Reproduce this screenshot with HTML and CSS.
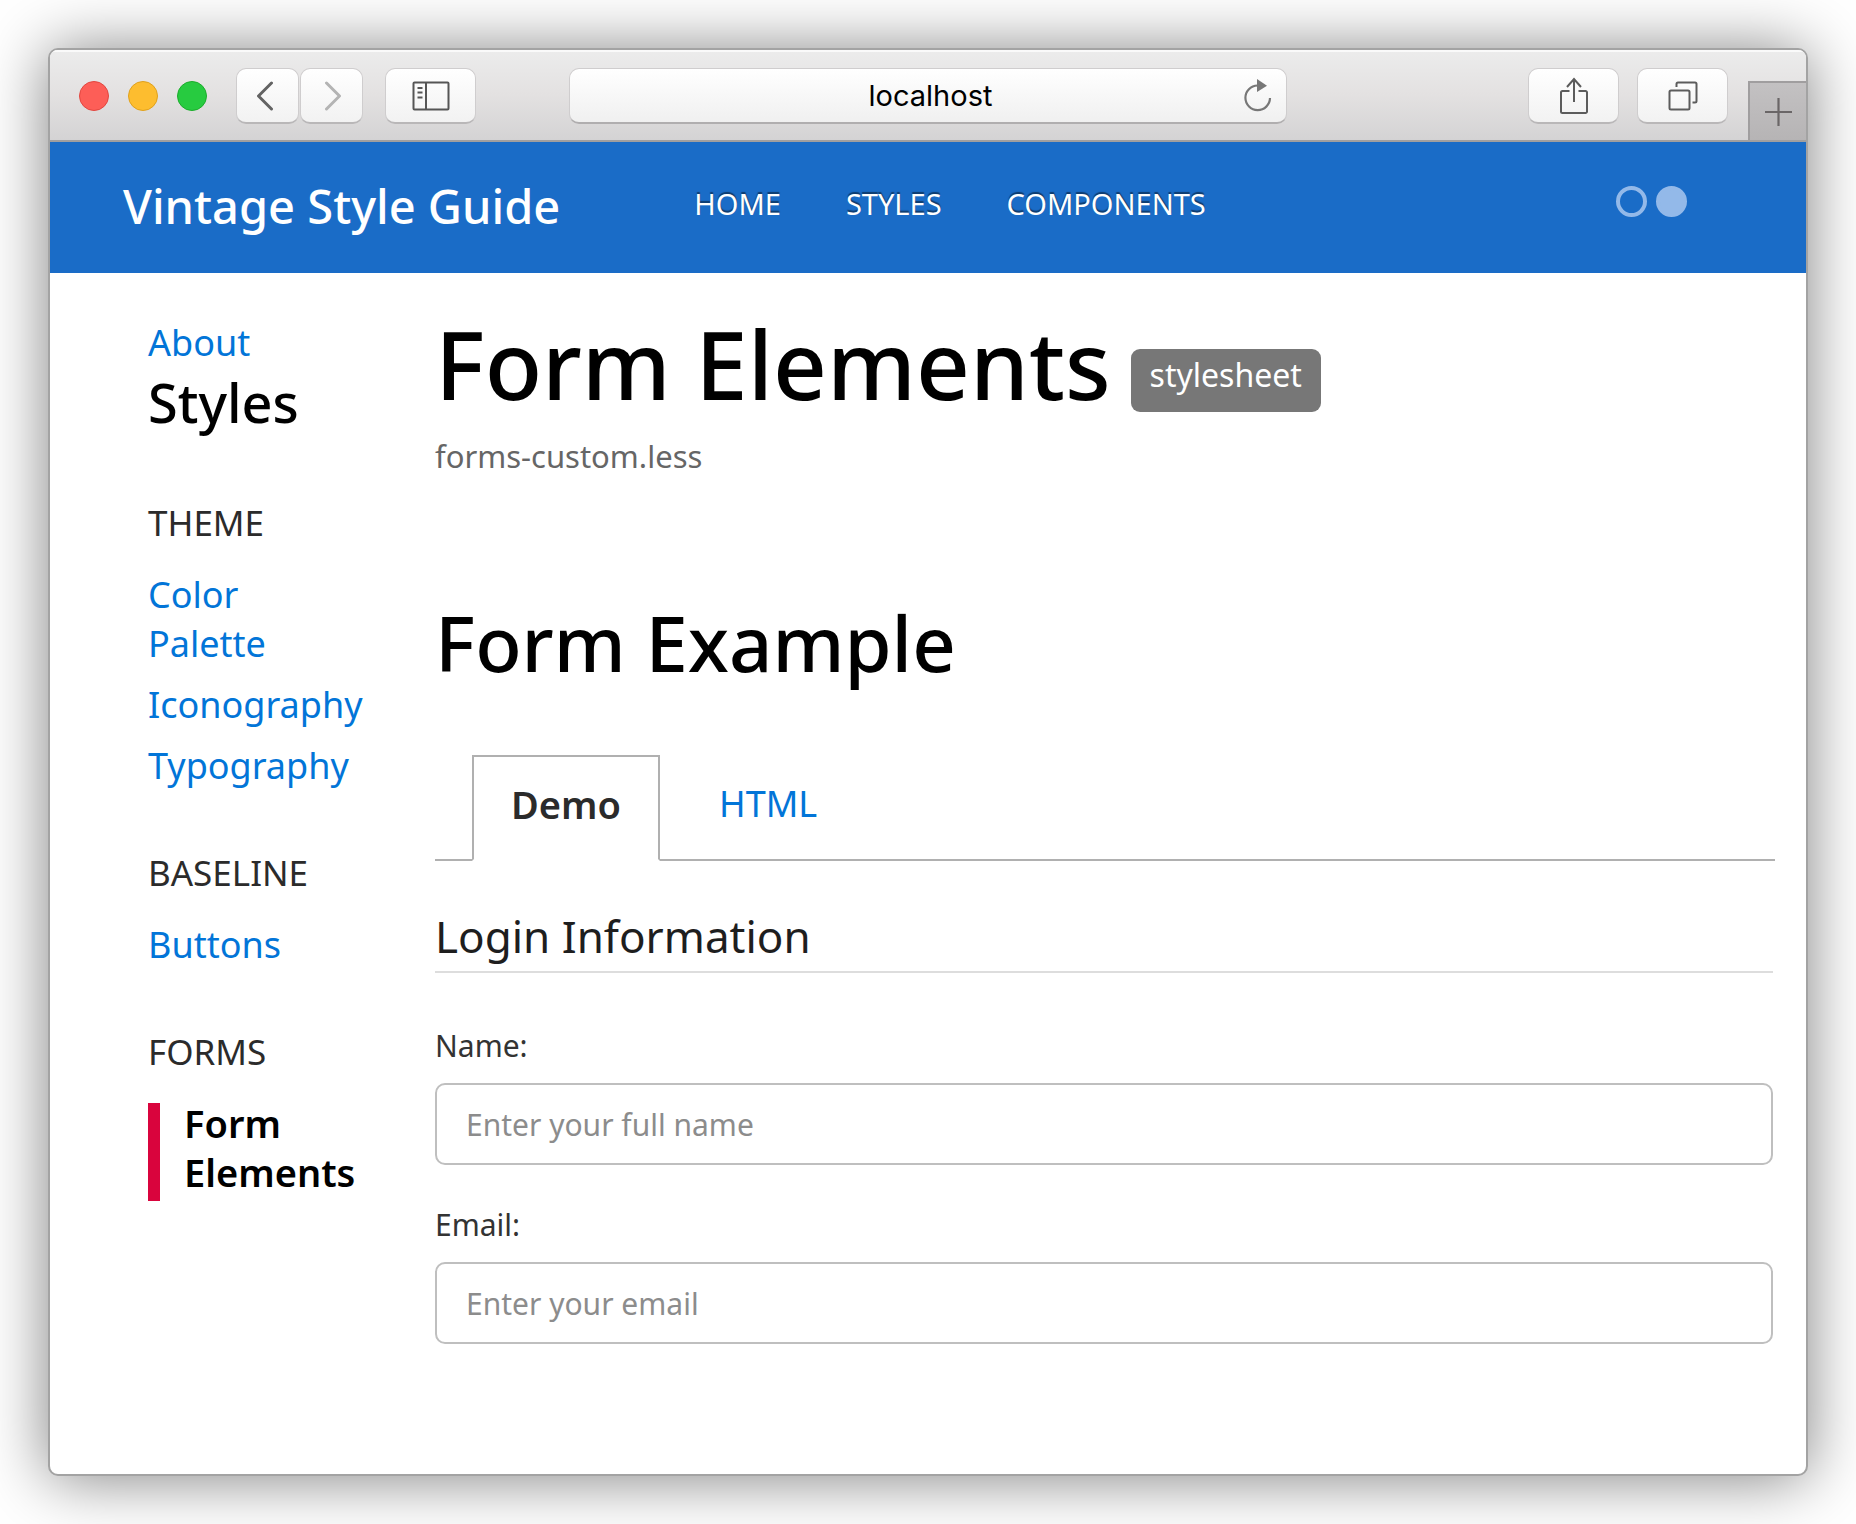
FILE: index.html
```html
<!DOCTYPE html>
<html lang="en">
<head>
<meta charset="utf-8">
<title>Form Elements – Vintage Style Guide</title>
<link rel="stylesheet" href="styles.css">
</head>
<body>
<div class="window">
  <div class="toolbar">
    <div class="lights">
      <span class="light light-close"></span>
      <span class="light light-minimize"></span>
      <span class="light light-zoom"></span>
    </div>
    <div class="history">
      <button class="tool tool-back" type="button" aria-label="Back">
        <svg width="18" height="30" viewBox="0 0 18 30"><path d="M15.500 2 2.500 15l13 13" fill="none" stroke="#636363" stroke-width="3" stroke-linecap="round" stroke-linejoin="round"/></svg>
      </button>
      <button class="tool tool-forward" type="button" aria-label="Forward">
        <svg width="18" height="30" viewBox="0 0 18 30"><path d="M2.500 2l13 13-13 13" fill="none" stroke="#b4b4b4" stroke-width="3" stroke-linecap="round" stroke-linejoin="round"/></svg>
      </button>
    </div>
    <button class="tool tool-wide" type="button" aria-label="Show sidebar">
      <svg width="38" height="30" viewBox="0 0 38 30" fill="none" stroke="#555"><rect x="1.500" y="1.500" width="35" height="27" rx="1" stroke-width="2"/><path d="M14 1.500v27" stroke-width="2"/><path d="M5.500 7h5M5.500 11.500h5M5.500 16.500h5" stroke-width="1.800"/></svg>
    </button>
    <div class="address">
      <input class="address-field" type="text" value="localhost" aria-label="Address">
      <button class="reload" type="button" aria-label="Reload">
        <svg width="30" height="34" viewBox="0 0 30 34"><path d="M14.500 6.500A12.300 12.300 0 1 0 27 19" fill="none" stroke="#777" stroke-width="2.200"/><path d="M14 0l10 6.800-10 6.200z" fill="#777"/></svg>
      </button>
    </div>
    <button class="tool tool-wide" type="button" aria-label="Share">
      <svg width="30" height="38" viewBox="0 0 30 38" fill="none" stroke="#5c5c5c" stroke-width="2"><path d="M10.500 14H3.500a1.500 1.500 0 0 0-1.500 1.500v19a1.500 1.500 0 0 0 1.500 1.500h23a1.500 1.500 0 0 0 1.500-1.500v-19a1.500 1.500 0 0 0-1.500-1.500h-7M15 25V2.500M8 10l7-8 7 8"/></svg>
    </button>
    <button class="tool tool-wide" type="button" aria-label="Show all tabs">
      <svg width="30" height="30" viewBox="0 0 30 30" fill="none" stroke="#5c5c5c" stroke-width="2"><rect x="1.500" y="9.500" width="20" height="19" rx="1.500"/><path d="M8.500 6V3a1.500 1.500 0 0 1 1.500-1.500h17A1.500 1.500 0 0 1 28.500 3v17a1.500 1.500 0 0 1-1.500 1.500h-2.500"/></svg>
    </button>
    <button class="new-tab" type="button" aria-label="New tab">
      <svg width="27" height="28" viewBox="0 0 27 28"><path d="M13.500 0v28M0 14h27" stroke="#6a6667" stroke-width="2.200"/></svg>
    </button>
  </div>

  <header class="site-header">
    <a class="brand" href="#">Vintage Style Guide</a>
    <nav class="site-nav" aria-label="Main">
      <a href="#">HOME</a>
      <a href="#">STYLES</a>
      <a href="#">COMPONENTS</a>
    </nav>
    <div class="themes">
      <button class="dot" type="button" aria-label="Outline theme"></button>
      <button class="dot dot-filled" type="button" aria-label="Solid theme"></button>
    </div>
  </header>

  <div class="layout">
    <nav class="sidebar" aria-label="Styles">
      <a class="side-link" href="#">About</a>
      <h2 class="side-title">Styles</h2>

      <h3 class="side-heading">THEME</h3>
      <ul class="side-list">
        <li><a class="side-link" href="#">Color Palette</a></li>
        <li><a class="side-link" href="#">Iconography</a></li>
        <li><a class="side-link" href="#">Typography</a></li>
      </ul>

      <h3 class="side-heading">BASELINE</h3>
      <ul class="side-list">
        <li><a class="side-link" href="#">Buttons</a></li>
      </ul>

      <h3 class="side-heading">FORMS</h3>
      <ul class="side-list">
        <li class="side-current"><a class="side-link" href="#" aria-current="page">Form Elements</a></li>
      </ul>
    </nav>

    <main class="content">
      <div class="title-row">
        <h1 class="title">Form Elements</h1>
        <span class="badge">stylesheet</span>
      </div>
      <p class="file-name">forms-custom.less</p>

      <h2 class="section-title">Form Example</h2>
      <div class="tabs">
        <a class="tab tab-active" href="#">Demo</a>
        <a class="tab" href="#">HTML</a>
      </div>

      <form class="demo">
        <fieldset class="group">
          <legend class="legend">Login Information</legend>
          <div class="field">
            <label for="name">Name:</label>
            <input id="name" type="text" placeholder="Enter your full name">
          </div>
          <div class="field">
            <label for="email">Email:</label>
            <input id="email" type="email" placeholder="Enter your email">
          </div>
        </fieldset>
      </form>
    </main>
  </div>
</div>
</body>
</html>
```
FILE: styles.css
```css
*, *::before, *::after { box-sizing: border-box; }

body {
  margin: 0;
  padding: 48px;
  background: #fff;
  color: #000;
  font-family: "Noto Sans", "Open Sans", sans-serif;
}

h1, h2, h3, p, ul { margin: 0; padding: 0; }
ul { list-style: none; }
a { text-decoration: none; }
button { padding: 0; cursor: pointer; }
svg { display: block; }

.window {
  min-height: calc(100vh - 96px);
  border: 2px solid #a3a3a3;
  border-radius: 10px;
  background: #fff;
  box-shadow: 0 2px 64px rgba(0, 0, 0, 0.5);
  overflow: hidden;
}

/* Browser toolbar */
.toolbar {
  display: flex;
  align-items: center;
  height: 92px;
  padding: 2px 0 0 29px;
  border-bottom: 2px solid #a19f9f;
  background: linear-gradient(#ececec, #e3e1e1 50%, #d4d3d4);
  box-shadow: inset 0 2px 0 #fafafa;
}

.lights { display: flex; gap: 19px; margin-right: 29px; }
.light {
  width: 30px;
  height: 30px;
  border: 1px solid;
  border-radius: 50%;
}
.light-close { background: #fd5e57; border-color: #e2463f; }
.light-minimize { background: #fdbd2f; border-color: #e0a11c; }
.light-zoom { background: #27cb40; border-color: #1cad2c; }

.history { display: flex; gap: 1px; margin-right: 22px; }

.tool {
  display: flex;
  align-items: center;
  justify-content: center;
  flex: none;
  height: 56px;
  border: 1px solid #cfcdce;
  border-bottom: 2px solid #b9b7b8;
  border-radius: 10px;
  background: linear-gradient(#fff, #f2f2f2);
}
.tool-back, .tool-forward { width: 63px; }
.tool-back { padding-right: 6px; }
.tool-forward { padding-left: 3px; }
.tool-wide { width: 91px; }
.tool-wide + .tool-wide { margin-left: 18px; }

.address {
  display: flex;
  align-items: center;
  flex: 1;
  height: 56px;
  margin: 0 241px 0 93px;
  padding: 0 13px 0 48px;
  border: 1px solid #cfcdce;
  border-bottom: 2px solid #b0aeaf;
  border-radius: 10px;
  background: linear-gradient(#fff, #f0f0f0);
}
.address-field {
  flex: 1;
  min-width: 0;
  padding: 0;
  border: 0;
  background: none;
  color: #000;
  font: 29px/40px Inter, "Liberation Sans", sans-serif;
  text-align: center;
}
.reload { border: 0; background: none; }

.new-tab {
  display: flex;
  align-items: center;
  justify-content: center;
  align-self: flex-end;
  flex: none;
  width: 58px;
  height: 59px;
  margin-left: 20px;
  border: 2px solid #a09e9f;
  border-width: 2px 0 0 2px;
  background: linear-gradient(#c3c1c2, #b6b4b5);
}

/* Site header */
.site-header {
  display: flex;
  align-items: flex-start;
  min-height: 131px;
  padding: 32px 119px 0 73px;
  background: #1a6cc7;
}
.brand {
  color: #fff;
  font-size: 47px;
  font-weight: 500;
  line-height: 64px;
}
.site-nav {
  display: flex;
  gap: 65px;
  margin: 10px auto 0 134px;
}
.site-nav a {
  color: #fff;
  font-size: 29px;
  line-height: 40px;
  text-shadow: 0 -2px 1px rgba(0, 0, 0, 0.45);
}
.themes { display: flex; gap: 9px; margin-top: 12px; }
.dot {
  width: 31px;
  height: 31px;
  border: 4px solid #93b9e9;
  border-radius: 50%;
  background: none;
}
.dot-filled { background: #93b9e9; }

/* Page body */
.layout {
  display: grid;
  grid-template-columns: 214px minmax(0, 1fr);
  gap: 73px;
  padding: 36px 31px 129px 98px;
}

.sidebar { padding-top: 9px; }
.side-link {
  display: block;
  color: #0275d8;
  font-size: 36px;
  line-height: 49px;
}
.side-title {
  margin-top: 4px;
  font-size: 54px;
  font-weight: 500;
  line-height: 62px;
}
.side-heading {
  margin-top: 58px;
  color: #2b2b2b;
  font-size: 35px;
  font-weight: 400;
  line-height: 49px;
}
.side-title + .side-heading { margin-top: 65px; }
.side-list {
  display: grid;
  gap: 12px;
  margin-top: 23px;
}
.side-current {
  display: flex;
  gap: 24px;
}
.side-current::before {
  content: "";
  flex: none;
  width: 12px;
  margin: 4px 0 -4px;
  background: #d9043d;
}
.side-current .side-link {
  color: #000;
  font-size: 38px;
  font-weight: 600;
}

.title-row {
  display: flex;
  align-items: flex-end;
  gap: 20px;
}
.title {
  font-size: 94px;
  font-weight: 500;
  line-height: 110px;
}
.badge {
  margin-bottom: 7px;
  padding: 0 19px 11px;
  border-radius: 9px;
  background: #777;
  color: #fff;
  font-size: 32px;
  line-height: 52px;
}
.file-name {
  margin-top: 16px;
  color: #666;
  font-size: 31px;
  line-height: 42px;
}
.section-title {
  margin-top: 121px;
  font-size: 76px;
  font-weight: 500;
  line-height: 90px;
}

.tabs {
  display: flex;
  gap: 20px;
  margin-top: 67px;
  padding-left: 37px;
  border-bottom: 2px solid #b0b0b0;
}
.tab {
  height: 106px;
  margin-bottom: -2px;
  padding: 22px 37px 0;
  border: 2px solid transparent;
  color: #0275d8;
  font-size: 36px;
  line-height: 50px;
}
.tab-active {
  border-color: #b0b0b0 #b0b0b0 #fff;
  background: #fff;
  color: #2b2b2b;
  font-size: 38px;
  font-weight: 600;
}

.demo { margin-top: 45px; padding-right: 2px; }
.group {
  min-width: 0;
  margin: 0;
  padding: 0;
  border: 0;
}
.legend {
  width: 100%;
  margin-bottom: 52px;
  padding: 0 0 5px;
  border-bottom: 2px solid #ddd;
  color: #1e1e1e;
  font-size: 44px;
  line-height: 60px;
}
.field { display: grid; gap: 16px; }
.field + .field { margin-top: 39px; }
.field label {
  color: #333;
  font-size: 30px;
  line-height: 42px;
}
.field input {
  width: 100%;
  height: 82px;
  padding: 0 29px;
  border: 2px solid #bfbfbf;
  border-radius: 10px;
  background: #fff;
  color: #333;
  font-family: inherit;
  font-size: 30px;
}
.field input::placeholder { color: #8c8c8c; opacity: 1; }
```
